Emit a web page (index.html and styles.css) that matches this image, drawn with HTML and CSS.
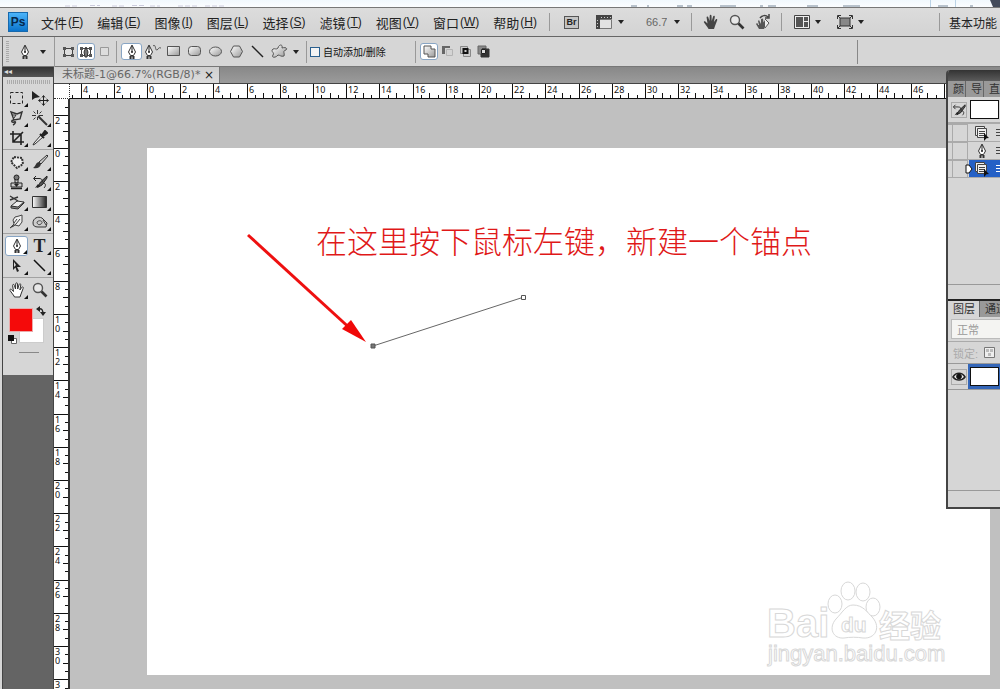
FILE: index.html
```html
<!DOCTYPE html>
<html lang="zh-CN">
<head>
  <meta charset="UTF-8" />
  <meta name="viewport" content="width=device-width, initial-scale=1" />
  <title>未标题-1</title>
  <link rel="stylesheet" href="styles.css">
</head>
<body>

  <!-- shared icons -->
  <svg class="defs" width="0" height="0" aria-hidden="true">
    <defs>
      <linearGradient id="metal" x1="0" y1="0" x2="1" y2="1">
        <stop offset="0" stop-color="#fff" />
        <stop offset="1" stop-color="#999" />
      </linearGradient>
      <linearGradient id="fade">
        <stop offset="0" stop-color="#fff" />
        <stop offset="1" stop-color="#222" />
      </linearGradient>
      <symbol id="pen" viewBox="0 0 16 16">
        <path d="M8 1 4.500 8l2 3.500h3l2-3.500z" fill="#fff" stroke="#333" />
        <path d="M8 2v6" stroke="#222" />
        <circle cx="8" cy="8" r="1" fill="#222" />
        <path d="M5.500 12h5v3h-5z" fill="#333" />
        <path d="M7.500 12.500h1V15h-1z" fill="#ddd" />
      </symbol>
      <symbol id="hand" viewBox="0 0 16 16">
        <path d="M5 14 1 8.500c-.6-1.200.8-1.800 1.600-.8L4.500 9.500 3.600 3.500c-.1-1.300 1.400-1.500 1.700-.2L6.500 7 6.700 1.800c.1-1.300 1.700-1.300 1.800 0L8.700 7l1.400-4.500c.4-1.200 1.900-.8 1.700.4L10.900 8l1.800-2.600c.7-1 2-.3 1.500.9L12 12l-1 3H5.500z" />
      </symbol>
      <symbol id="lens" viewBox="0 0 16 16">
        <circle cx="6" cy="6" r="4.500" fill="#e8e8e8" stroke="#555" stroke-width="1.400" />
        <path d="m9.500 9.500 5 5" stroke="#333" stroke-width="2.600" />
      </symbol>
      <symbol id="doc" viewBox="0 0 16 16">
        <path d="M1.500 1.500h9v2h2v9h-9v-2h-2z" fill="#eee" stroke="#444" />
        <path d="M3.500 10.500v-7h7M5 6.500h6M5 8.500h6M5 10.500h5" fill="none" stroke="#444" />
        <path d="m10 8 5 5-2.500.3L10 16z" fill="#111" />
      </symbol>
      <symbol id="histbrush" viewBox="0 0 16 16">
        <path d="M15 2 8.500 8l-3 5.500L10 11l5-7z" fill="#555" stroke="#222" />
        <path d="M2 4.500h5c3 0 4 2 3 4M4 2 1.500 4.500 4 7M11 9c3 0 3 3 1 5" fill="none" stroke="#222" />
        <path d="m3 14 3-4 2 2z" fill="#222" />
      </symbol>
    </defs>
  </svg>

  <div class="browser-edge">
    <svg width="100%" height="7" aria-hidden="true">
      <path d="M65 6h14M90 5.500h10M112 6h14M132 5.500h14M150 6h10M178 6h20M205 6h20" stroke="#ccd" stroke-dasharray="5 2" />
      <path d="M631 6h6M647 6h2M677 6h6M687 6h5M720 6h16M760 6h3M768 6h8M807 6h11M843 6h17M938 6h10M970 6h3" stroke="#789" />
      <path d="M930.500 0v7M955.500 0v7" stroke="#bcd3e6" />
      <path d="M990 0h10v7h-7z" fill="#434a5a" />
    </svg>
  </div>

  <header class="menubar">
    <div class="logo">Ps</div>
    <nav class="menus">
      <button>文件<span>(<u>F</u>)</span></button>
      <button>编辑<span>(<u>E</u>)</span></button>
      <button>图像<span>(<u>I</u>)</span></button>
      <button>图层<span>(<u>L</u>)</span></button>
      <button>选择<span>(<u>S</u>)</span></button>
      <button>滤镜<span>(<u>T</u>)</span></button>
      <button>视图<span>(<u>V</u>)</span></button>
      <button>窗口<span>(<u>W</u>)</span></button>
      <button>帮助<span>(<u>H</u>)</span></button>
    </nav>
    <div class="app-tools">
      <button class="bridge">Br</button>
      <button class="drop" aria-label="查看额外内容">
        <svg width="18" height="14"><path d="M4.500 4.500h12v9h-12z" fill="#e2e2e2" stroke="#777" /><path d="M1 0h16v4H5v10H1z" fill="#444" /><path d="M6 2.500h11M2.500 5v8" stroke="#ccc" stroke-dasharray="1 2" /></svg>
      </button>
      <label class="zoom drop"><select aria-label="缩放级别"><option>66.7</option></select></label>
    </div>
    <div class="app-tools view-tools">
      <button aria-label="抓手工具"><svg width="16" height="16" fill="#444"><use href="#hand" /></svg></button>
      <button aria-label="缩放工具"><svg width="16" height="16"><use href="#lens" /></svg></button>
      <button aria-label="旋转视图工具">
        <svg width="16" height="16"><path d="m4 15-3-5 1-1 2 2-1-4 1-1 2 4V5l2-.5.5 4L10 6l2 1-1 4-2 4z" fill="#555" /><path d="m10 5 4 4-4 5" fill="#eee" stroke="#555" /><path d="M5 4c2-3 6-3 8-1M14 0v4h-4" fill="none" stroke="#444" stroke-width="1.500" /></svg>
      </button>
    </div>
    <div class="app-tools layout-tools">
      <button class="drop" aria-label="排列文档">
        <svg width="16" height="14"><path d="M.5.500h15v13H.500z" fill="#eee" stroke="#444" /><path d="M2 2h7v10H2zM10 2h4v4h-4zM10 7h4v5h-4z" fill="#555" /></svg>
      </button>
      <button class="drop" aria-label="屏幕模式">
        <svg width="16" height="14"><path d="M3 3h10v8H3z" fill="#888" stroke="#333" /><path d="M.500 4V.500H4M12 .500h3.500V4M15.500 10v3.500H12M4 13.500H.500V10" fill="none" stroke="#333" /><path d="m1 1 2 2M15 1l-2 2M1 13l2-2M15 13l-2-2" stroke="#333" /></svg>
      </button>
    </div>
    <button class="workspace">基本功能</button>
  </header>

  <section class="options">
    <div class="current-tool">
      <span class="grip"></span>
      <button class="drop" aria-label="钢笔工具预设"><svg width="16" height="16"><use href="#pen" /></svg></button>
    </div>
    <div class="opt-group narrow">
      <button aria-label="形状图层"><svg width="13" height="12"><path d="M2.500 2.500h8v7h-8z" fill="#ddd" stroke="#444" /><path d="M1 1h3v3H1zM9 1h3v3H9zM1 8h3v3H1zM9 8h3v3H9z" fill="#555" /></svg></button>
      <button class="active" aria-label="路径"><svg width="14" height="12"><path d="M2.500 2.500h9v7h-9z" fill="#fff" stroke="#444" /><path d="M1 1h3v3H1zM10 1h3v3h-3zM1 8h3v3H1zM10 8h3v3h-3z" fill="#555" /><path d="m7 1-2 5 1 5h2l1-5z" fill="#777" stroke="#333" /></svg></button>
      <button aria-label="填充像素"><svg width="11" height="11"><path d="M1.500 1.500h8v8h-8z" fill="#ddd" stroke="#999" /></svg></button>
    </div>
    <div class="opt-group shapes">
      <button class="active" aria-label="钢笔工具"><svg width="16" height="16"><use href="#pen" /></svg></button>
      <button aria-label="自由钢笔工具"><svg width="18" height="16"><use href="#pen" x="-3" width="16" height="16" /><path d="M9 2c3-3 2 5 4 4s1-3 4-2" fill="none" stroke="#555" /></svg></button>
      <button aria-label="矩形工具"><svg width="13" height="11"><path d="M.500.500h12v9H.500z" fill="url(#metal)" stroke="#555" /></svg></button>
      <button aria-label="圆角矩形工具"><svg width="13" height="11"><rect x=".5" y=".5" width="12" height="9" rx="3" fill="url(#metal)" stroke="#555" /></svg></button>
      <button aria-label="椭圆工具"><svg width="13" height="11"><ellipse cx="6.500" cy="5.500" rx="6" ry="4.500" fill="url(#metal)" stroke="#555" /></svg></button>
      <button aria-label="多边形工具"><svg width="13" height="13"><path d="M3.500 1h6l3 5.500-3 5.500h-6l-3-5.500z" fill="url(#metal)" stroke="#555" /></svg></button>
      <button aria-label="直线工具"><svg width="13" height="13"><path d="m1 1 11 11" stroke="#222" stroke-width="1.500" /></svg></button>
      <button class="drop custom-shape" aria-label="自定形状工具"><svg width="17" height="15"><path d="M7 4c1-4 5-4 4 0 3-1 6 0 4 2-4 1-1 3-2 6-3 1-4-1-6-1-2 3-7 3-5 0C4 8-1 8 2 5c2-1 3 1 5-1z" fill="url(#metal)" stroke="#555" /></svg></button>
    </div>
    <label class="auto-add"><input type="checkbox">自动添加/删除</label>
    <div class="opt-group narrow">
      <button class="active" aria-label="添加到路径区域"><svg width="13" height="13"><path d="M1 1h7v3h4v8H5V9H1z" fill="url(#metal)" stroke="#555" /></svg></button>
      <button aria-label="从路径区域减去"><svg width="13" height="13"><path d="M5.500 4.500h6v6h-6z" fill="#d4d4d4" stroke="#b4b4b4" /><path d="M1 9V1h8v2H4v6z" fill="#666" /></svg></button>
      <button aria-label="交叉路径区域"><svg width="13" height="13"><path d="M1.500 1.500h7v7h-7z" fill="#ccc" stroke="#888" /><path d="M4.500 4.500h7v7h-7z" fill="#ccc" stroke="#888" /><path d="M4.500 4h4v4h-4z" fill="#ccc" stroke="#111" stroke-width="2" /></svg></button>
      <button aria-label="重叠路径区域除外"><svg width="13" height="13"><path d="M1 1h8v8H1z" fill="#888" stroke="#666" /><path d="M5 4h7v8H4V9h5V4z" fill="#333" stroke="#333" /><path d="M4.500 4.500h4v4h-4z" fill="#ddd" stroke="#222" /></svg></button>
    </div>
    <span class="options-end"></span>
  </section>

  <main class="workarea">
    <aside class="toolcol">
      <div class="tool-head">◂◂</div>
      <div class="toolbox">
        <div class="tool-grip"></div>
        <div class="tool-group">
          <button class="more" aria-label="选框工具"><svg width="16" height="16"><path d="M1.500 2.500h12v11h-12z" fill="none" stroke="#222" stroke-dasharray="3 2" /></svg></button>
          <button aria-label="移动工具"><svg width="18" height="16"><path d="M1 1v9l3-2 5-1z" fill="#222" /><path d="M12.500 6v9M8 10.500h9M11 7.500l1.500-2L14 7.500M11 13.500l1.500 2 1.500-2M9.500 9l-2 1.500 2 1.500M15.500 9l2 1.500-2 1.500" fill="none" stroke="#222" /></svg></button>
          <button class="more" aria-label="套索工具"><svg width="16" height="16"><path d="m2 2 6 2 5-2-2 7-6 1zM5 10c-3 0-3 3 0 2s1 2-1 3" fill="none" stroke="#333" stroke-width="1.400" /><path d="M3 5h4l-2 3" fill="none" stroke="#333" /></svg></button>
          <button class="more" aria-label="魔棒工具"><svg width="16" height="16"><path d="m6 6 9 9" stroke="#333" stroke-width="2" /><path d="M5.500 0v4M5.500 7v3M0 5.500h4M7 5.500h4M1.500 1.500l2 2M9.500 1.500l-2 2M1.500 9.500l2-2" stroke="#333" /></svg></button>
          <button class="more" aria-label="裁剪工具"><svg width="16" height="16"><path d="M4 1v11h11M1 4h11v11M4 12 14 2" fill="none" stroke="#222" stroke-width="1.600" /></svg></button>
          <button class="more" aria-label="吸管工具"><svg width="16" height="16"><path d="m9 5-7 8-1 2 2-1 8-7z" fill="#eee" stroke="#333" /><path d="m8 4 4 4M10 5l3-4 2 2-4 3z" fill="#222" stroke="#222" stroke-width="2" /></svg></button>
        </div>
        <div class="tool-group">
          <button class="more" aria-label="修补工具"><svg width="16" height="16"><path d="m5 3 8 1 1 6-6 4-6-6z" fill="#eee" stroke="#333" stroke-width="2" stroke-dasharray="2 1" /></svg></button>
          <button class="more" aria-label="画笔工具"><svg width="16" height="16"><path d="m15 1-8 7 2 2 7-8z" fill="#ccc" stroke="#333" /><path d="M7 8c-3 0-3 4-6 6 4 1 7 0 8-4z" fill="#333" /></svg></button>
          <button class="more" aria-label="仿制图章工具"><svg width="16" height="16"><path d="M6 5h3v4H6zM2 9h11v4H2z" fill="#ccc" stroke="#222" /><circle cx="7.500" cy="3.500" r="2.500" fill="#777" stroke="#222" /><path d="M2 14.500h11" stroke="#222" stroke-width="1.500" /><path d="M5 10h5l-2.500 3z" fill="#222" /></svg></button>
          <button class="more" aria-label="历史记录画笔工具"><svg width="16" height="16"><use href="#histbrush" /></svg></button>
          <button class="more" aria-label="橡皮擦工具"><svg width="16" height="16"><path d="m2 12 6-5 7 1-6 6z" fill="#eee" stroke="#333" /><path d="M2 12v2l7 1 6-6V8l-6 5z" fill="#888" stroke="#333" /><path d="m1 2 8 5M1 6l8-3" stroke="#333" stroke-width="1.400" /></svg></button>
          <button class="more" aria-label="渐变工具"><svg width="16" height="16"><path d="M.500 2.500h14v11H.500z" fill="url(#fade)" stroke="#333" /></svg></button>
          <button class="more" aria-label="涂抹工具"><svg width="16" height="16"><path d="m1 14 4-4-1-4 2-3 4-1 3-1v7l-3 4-4-1z" fill="#eee" stroke="#444" /><path d="m5 9 3-4M7 10l4-5M3 13l4-3" stroke="#444" /></svg></button>
          <button class="more" aria-label="海绵工具"><svg width="16" height="16"><path d="M1 9c0-5 5-7 9-5l5 5-1 4H6c-3 0-5-1-5-4z" fill="#ccc" stroke="#333" /><path d="M5 8c3-3 7 0 4 2S5 9 5 8m6-2 3 5" fill="none" stroke="#444" /></svg></button>
        </div>
        <div class="tool-group">
          <button class="more active" aria-label="钢笔工具"><svg width="16" height="16"><use href="#pen" /></svg></button>
          <button class="more type" aria-label="文字工具">T</button>
          <button class="more" aria-label="直接选择工具"><svg width="16" height="16"><path d="M4 1v11l2.500-2.500L8 14l2-1-2-4h4z" fill="#222" /><path d="M5 4v5l2-2z" fill="#ddd" /></svg></button>
          <button class="more" aria-label="直线工具"><svg width="16" height="16"><path d="m2 2 11 11" stroke="#111" stroke-width="1.500" /></svg></button>
        </div>
        <div class="tool-group">
          <button class="more" aria-label="抓手工具"><svg width="16" height="16" fill="#fff" stroke="#333"><use href="#hand" /></svg></button>
          <button aria-label="缩放工具"><svg width="16" height="16"><use href="#lens" /></svg></button>
        </div>
        <div class="swatches">
          <button class="background" aria-label="背景色"></button>
          <button class="foreground" aria-label="前景色"></button>
          <button class="swap" aria-label="切换前景色和背景色"><svg width="10" height="10"><path d="M2 3c4-1 5 1 5 5" fill="none" stroke="#222" stroke-width="1.400" /><path d="M4 0v6L0 3zM4 6h6l-3 4z" fill="#222" /></svg></button>
          <button class="reset" aria-label="默认颜色"><svg width="9" height="9"><path d="M3.500 3.500h5v5h-5z" fill="#fff" stroke="#666" /><path d="M0 0h6v6H0z" fill="#111" /></svg></button>
        </div>
        <div class="mask-line"></div>
      </div>
    </aside>

    <section class="document">
      <div class="tabs">
        <div class="tab">未标题-1@66.7%(RGB/8)* <button aria-label="关闭">×</button></div>
      </div>
      <div class="view">
        <div class="corner"></div>
        <svg class="ruler-x" id="rulerX"></svg>
        <svg class="ruler-y" id="rulerY"></svg>
        <div class="canvas">
          <div class="paper">
            <svg class="path-layer" width="400" height="220">
              <path d="M101 87 207 184" stroke="#ee1010" stroke-width="3" />
              <path d="M219 194 195 181 204 172z" fill="#f00808" />
              <path d="m226 198 151-49" stroke="#666" />
              <path d="M224 196h4v4h-4z" fill="#777" stroke="#555" />
              <path d="M374.500 147.500h4v4h-4z" fill="#fff" stroke="#555" />
            </svg>
            <p class="note">在这里按下鼠标左键，新建一个锚点</p>
            <svg class="watermark" width="184" height="98">
              <ellipse cx="71" cy="27" rx="7" ry="9" />
              <ellipse cx="84" cy="14" rx="7" ry="9" />
              <ellipse cx="99" cy="15" rx="7" ry="9" />
              <ellipse cx="109" cy="30" rx="7" ry="9" />
              <path d="M89 28c-7 0-11 8-17 14-8 9-3 20 8 19 6-1 13-1 19 0 12 1 18-10 10-20-6-6-10-13-20-13z" />
              <text x="3" y="60" class="bai">Bai</text>
              <text x="77" y="55" class="du">du</text>
              <text x="115" y="60" class="jy">经验</text>
              <text x="4" y="84" class="url">jingyan.baidu.com</text>
            </svg>
          </div>
        </div>
      </div>
    </section>

    <aside class="panels">
      <div class="panel-head"></div>
      <div class="panel-tabs dim"><span>颜</span><span>导</span><span>直</span></div>
      <div class="snapshot">
        <button aria-label="设置历史记录画笔的源"><svg width="14" height="14" viewBox="0 0 16 16"><use href="#histbrush" /></svg></button>
        <span class="thumb"></span>
      </div>
      <ul class="history">
        <li><span class="cell"></span><svg width="16" height="16"><use href="#doc" /></svg><i></i></li>
        <li><span class="cell"></span><svg width="16" height="16"><use href="#pen" /></svg><i></i></li>
        <li class="selected"><span class="cell"></span><svg width="16" height="16"><use href="#doc" /></svg><i></i><svg class="marker" width="8" height="10"><path d="M1 1h3l3 4-3 4H1z" fill="#fff" stroke="#111" /></svg></li>
      </ul>
      <div class="panel-foot"></div>
      <div class="panel-tabs"><span class="current">图层</span><span>通道</span></div>
      <div class="blend"><select aria-label="混合模式" disabled><option>正常</option></select></div>
      <div class="lock">锁定:<svg width="11" height="11"><path d="M.500.500h10v10H.500z" fill="#eee" stroke="#777" /><path d="M2 2h3v3H2zM6 2h3v3H6zM4 6h3v3H4z" fill="#bbb" /></svg></div>
      <div class="layer">
        <button aria-label="指示图层可见性"><svg width="14" height="12"><path d="M1 6c3-5 9-5 12 0-3 4-9 4-12 0z" fill="#eee" stroke="#222" stroke-width="1.500" /><circle cx="7" cy="5.500" r="2.800" fill="#111" /></svg></button>
        <span class="thumb"></span>
      </div>
      <div class="layer-empty"></div>
      <div class="panel-foot"></div>
    </aside>
  </main>

  <script src="script.js"></script>
</body>
</html>
```
FILE: styles.css
```css
* {
  box-sizing: border-box;
  margin: 0;
  padding: 0;
}

body {
  display: flex;
  flex-direction: column;
  height: 100vh;
  overflow: hidden;
  background: #d6d6d6;
  color: #222;
  font-family: "Liberation Sans", "Noto Sans CJK SC", sans-serif;
  font-size: 12px;
}

button {
  display: flex;
  align-items: center;
  justify-content: center;
  flex-shrink: 0;
  background: none;
  border: none;
  color: inherit;
  font: inherit;
}

svg {
  display: block;
  flex-shrink: 0;
}

.defs {
  position: absolute;
}

.browser-edge {
  height: 8px;
  flex-shrink: 0;
  background: linear-gradient(#f1f8fd, #fbfdff);
  border-bottom: 1px solid #777;
}

/* Menu bar */
.menubar {
  display: flex;
  align-items: center;
  flex-shrink: 0;
  height: 29px;
  padding-left: 8px;
  border-bottom: 1px solid #666;
  background: linear-gradient(#dcdcdc, #d3d3d3);
  white-space: nowrap;
}

.logo {
  width: 20px;
  height: 20px;
  margin-right: 13px;
  border: 1px solid #1769ad;
  background: linear-gradient(#4cb4fa, #0b74cb);
  color: #06284d;
  font-size: 12px;
  font-weight: bold;
  line-height: 18px;
  text-align: center;
}

.menus {
  display: flex;
  gap: 14px;
  font-size: 13px;
}

.menus button {
  height: 16px;
}

.menus span {
  font-size: 12px;
  padding-left: 1px;
}

.app-tools {
  display: flex;
  align-items: center;
  height: 18px;
  margin-left: 12px;
  padding-left: 14px;
  border-left: 1px solid #999;
  gap: 16px;
}

.view-tools {
  padding-left: 11px;
  gap: 10px;
  margin-left: 11px;
}

.layout-tools {
  margin-left: 10px;
  padding-left: 12px;
}

.bridge {
  width: 15px;
  height: 13px;
  border: 1px solid #555;
  background: #c4c4c4;
  font-size: 9px;
  font-weight: bold;
}

.drop {
  display: flex;
  align-items: center;
  gap: 5px;
}

.drop::after {
  content: "";
  border: 3px solid transparent;
  border-top: 4px solid #222;
  border-bottom: 0;
}

.zoom {
  margin-left: 6px;
  gap: 7px;
}

.zoom select {
  width: 21px;
  appearance: none;
  border: none;
  background: none;
  color: #666;
  font: 11px "Liberation Sans", sans-serif;
}

.workspace {
  height: 18px;
  width: 61px;
  margin-left: auto;
  padding-left: 9px;
  border-left: 1px solid #999;
  justify-content: flex-start;
}

/* Options bar */
.options {
  display: flex;
  align-items: center;
  flex-shrink: 0;
  height: 30px;
  margin-left: 2px;
  border-left: 1px solid #666;
  border-bottom: 1px solid #777;
  background: #d6d6d6;
}

.current-tool {
  display: flex;
  align-items: center;
  width: 52px;
  height: 30px;
  padding-left: 3px;
  gap: 8px;
  border-right: 1px solid #999;
}

.current-tool .drop {
  gap: 7px;
}

.grip {
  width: 3px;
  height: 21px;
  background: repeating-linear-gradient(#aaa 0 1px, #d6d6d6 1px 2px);
}

.opt-group {
  display: flex;
  align-items: center;
  height: 22px;
  padding: 0 3px 0 4px;
  border-right: 1px solid #999;
}

.opt-group button {
  width: 21px;
  height: 17px;
  border-radius: 3px;
}

.opt-group.narrow button {
  width: 18px;
}

.opt-group .active,
.tool-group .active {
  background: #fff;
  border: 1px solid #88a5c4;
}

.opt-group .custom-shape {
  width: 33px;
  justify-content: flex-start;
  padding-left: 3px;
}

.shapes {
  padding-right: 5px;
}

.auto-add {
  display: flex;
  align-items: center;
  width: 109px;
  height: 22px;
  padding-left: 3px;
  gap: 3px;
  border-right: 1px solid #999;
  color: #111;
  font-size: 10px;
  white-space: nowrap;
}

.auto-add input {
  appearance: none;
  width: 10px;
  height: 10px;
  border: 1px solid #2b608f;
  background: #f4f4f4;
}

.auto-add + .narrow {
  border: none;
}

.options-end {
  width: 143px;
  height: 24px;
  margin-left: auto;
  border-left: 1px solid #888;
}

/* Work area */
.workarea {
  position: relative;
  display: flex;
  flex: 1;
  min-height: 0;
  padding-left: 2px;
}

.toolcol {
  width: 52px;
  flex-shrink: 0;
  border-left: 1px solid #444;
  border-right: 1px solid #444;
  background: #646464;
}

.tool-head {
  height: 10px;
  padding-left: 1px;
  background: linear-gradient(#333, #555);
  color: #ddd;
  font-size: 8px;
  line-height: 9px;
}

.toolbox {
  height: 298px;
  background: #d6d6d6;
}

.tool-grip {
  height: 11px;
  border: solid #d6d6d6;
  border-width: 3px 3px 4px 4px;
  background: repeating-linear-gradient(90deg, #aaa 0 1px, #d6d6d6 1px 2px);
}

.tool-group {
  display: grid;
  grid-template-columns: 23px 23px;
  grid-auto-rows: 20px;
  padding: 2px 0 1px 2px;
  border-top: 1px solid #a2a2a2;
}

.tool-grip + .tool-group {
  padding-top: 0;
  border-top: none;
}

.tool-group button {
  position: relative;
}

.more::after {
  content: "";
  position: absolute;
  right: 0;
  bottom: 1px;
  border: 2px solid #111;
  border-top-color: transparent;
  border-left-color: transparent;
}

.tool-group .active {
  border-radius: 3px;
}

.tool-group .type {
  font-family: "Liberation Serif", serif;
  font-size: 18px;
  font-weight: bold;
}

.swatches {
  position: relative;
  height: 44px;
}

.swatches button {
  position: absolute;
}

.swatches .foreground {
  left: 6px;
  top: 7px;
  width: 24px;
  height: 24px;
  border: 1px solid #eba9a9;
  background: #f50a0a;
}

.swatches .background {
  left: 16px;
  top: 17px;
  width: 25px;
  height: 25px;
  border: 1px solid #ccc;
  background: #fff;
}

.swap {
  left: 33px;
  top: 5px;
}

.reset {
  left: 5px;
  top: 34px;
}

.mask-line {
  width: 20px;
  height: 1px;
  margin: 7px 0 0 16px;
  background: #888;
}

/* Document window */
.document {
  display: flex;
  flex: 1;
  flex-direction: column;
  min-width: 0;
}

.tabs {
  height: 17px;
  background: linear-gradient(#888, #9b9b9b);
  border-bottom: 1px solid #444;
}

.tab {
  display: flex;
  align-items: center;
  justify-content: space-between;
  width: 166px;
  height: 16px;
  padding: 0 5px 0 8px;
  background: linear-gradient(#cfcfcf, #dcdcdc);
  border-right: 1px solid #777;
  color: #666;
  font: 11px "DejaVu Sans", "Noto Sans CJK SC", sans-serif;
  line-height: 16px;
  white-space: nowrap;
}

.tab button {
  color: #222;
  font-size: 12px;
  line-height: 16px;
}

.view {
  display: grid;
  grid-template-columns: 16px 1fr;
  grid-template-rows: 15px 1fr;
  flex: 1;
  min-height: 0;
}

.corner {
  border-bottom: 1px dotted #333;
  border-right: 1px dotted #333;
  background: #fff;
}

.ruler-x,
.ruler-y {
  width: 100%;
  height: 100%;
  background: #fff;
  fill: #111;
  font: 9px "Noto Sans", sans-serif;
  overflow: hidden;
}

.ruler-x {
  border-bottom: 1px solid #111;
}

.ruler-y {
  border-right: 2px solid #333;
}

.canvas {
  display: flex;
  padding: 49px 10px 14px 77px;
  background: #c0c0c0;
}

.paper {
  position: relative;
  flex: 1;
  background: #fff;
}

.path-layer {
  position: absolute;
  left: 0;
  top: 0;
}

.note {
  position: absolute;
  left: 169px;
  top: 69px;
  color: #e01818;
  font-family: "Noto Sans CJK SC", sans-serif;
  font-size: 31px;
  font-weight: 300;
  line-height: 46px;
  white-space: nowrap;
}

.watermark {
  position: absolute;
  right: 42px;
  bottom: 0;
  fill: #fff;
  stroke: #d8d8d8;
}

.bai {
  font: bold 40px "Liberation Sans", sans-serif;
}

.du {
  font: bold 21px "Liberation Sans", sans-serif;
}

.jy {
  font: bold 31px "Noto Sans CJK SC", sans-serif;
}

.url {
  font: 22px "Liberation Sans", sans-serif;
}

/* Floating panels */
.panels {
  position: absolute;
  right: 0;
  top: 3px;
  width: 54px;
  border: solid #444;
  border-width: 0 0 2px 2px;
  border-top-left-radius: 4px;
  background: #d6d6d6;
  overflow: hidden;
}

.panel-head {
  height: 11px;
  background: linear-gradient(#333, #5b5b5b);
}

.panel-tabs {
  display: flex;
  height: 16px;
  background: #999;
  color: #333;
  font-size: 11px;
  line-height: 16px;
  white-space: nowrap;
}

.panel-tabs span {
  width: 32px;
  flex-shrink: 0;
  padding-left: 5px;
  border-right: 1px solid #666;
}

.panel-tabs .current {
  background: #d6d6d6;
}

.panel-tabs.dim span {
  width: 18px;
}

.snapshot {
  display: flex;
  align-items: center;
  height: 27px;
  padding-left: 3px;
  gap: 3px;
  border-bottom: 2px solid #aaa;
}

.snapshot button {
  width: 16px;
  height: 16px;
  border: 1px solid #aaa;
}

.thumb {
  width: 29px;
  height: 19px;
  flex-shrink: 0;
  border: 1px solid #111;
  background: #fff;
}

.history {
  height: 160px;
  list-style: none;
}

.history li {
  position: relative;
  display: flex;
  align-items: center;
  height: 18px;
  border-bottom: 1px solid #aaa;
  gap: 6px;
}

.cell {
  width: 21px;
  height: 17px;
  border: solid #aaa;
  border-width: 1px 1px 0 0;
  box-shadow: inset 4px 0 #d6d6d6, inset 5px 0 #aaa;
}

.history i {
  width: 4px;
  height: 8px;
  flex-shrink: 0;
  background: repeating-linear-gradient(#444 0 1px, transparent 1px 3px);
}

.history .selected {
  background: linear-gradient(90deg, #d6d6d6 21px, #2460c6 21px);
}

.selected i {
  background: repeating-linear-gradient(#fff 0 1px, transparent 1px 3px);
}

.marker {
  position: absolute;
  left: 17px;
  top: 4px;
}

.panel-foot {
  height: 17px;
  border-top: 1px solid #999;
}

.history + .panel-foot {
  border-bottom: 2px solid #222;
}

.blend {
  height: 24px;
  padding: 2px 0 2px 3px;
}

.blend select {
  width: 80px;
  height: 20px;
  padding-left: 5px;
  appearance: none;
  border: 1px solid #bbb;
  background: #f4f4f2;
  color: #999;
  font: 11px "Noto Sans CJK SC", sans-serif;
  opacity: 1;
}

.lock {
  display: flex;
  align-items: center;
  height: 23px;
  padding-left: 5px;
  gap: 6px;
  border-top: 1px solid #aaa;
  border-bottom: 1px solid #999;
  color: #aaa;
  font-size: 11px;
  white-space: nowrap;
}

.layer {
  display: flex;
  align-items: center;
  height: 26px;
  gap: 3px;
  padding-left: 3px;
  border-bottom: 1px solid #999;
  background: linear-gradient(90deg, #d6d6d6 20px, #3466b8 20px);
}

.layer button {
  width: 16px;
  height: 16px;
  border: 1px solid #aaa;
}

.layer-empty {
  height: 100px;
}
```
FILE: script.js
```js
const SVG_NS = 'http://www.w3.org/2000/svg';
const STEP = 33.2;     // pixels between two labelled marks
const ZERO_X = 77;     // where the paper starts on each ruler
const ZERO_Y = 49;
const DEPTH = 14;

function addTick(svg, x, y, width, height) {
  const rect = document.createElementNS(SVG_NS, 'rect');
  rect.setAttribute('x', x);
  rect.setAttribute('y', y);
  rect.setAttribute('width', width);
  rect.setAttribute('height', height);
  svg.appendChild(rect);
}

function addLabel(svg, x, y, value) {
  const text = document.createElementNS(SVG_NS, 'text');
  text.setAttribute('x', x);
  text.setAttribute('y', y);
  text.textContent = value;
  svg.appendChild(text);
}

function drawRuler(svg, zero, vertical) {
  svg.textContent = '';
  const length = vertical ? svg.clientHeight : svg.clientWidth;
  const first = Math.ceil(-zero / STEP * 4);

  for (let i = first; zero + i * STEP / 4 < length; i++) {
    const pos = Math.round(zero + i * STEP / 4);
    let size = 3;
    if (i % 4 === 0) size = DEPTH;
    else if (i % 2 === 0) size = 5;

    if (vertical) addTick(svg, DEPTH - size, pos, size, 1);
    else addTick(svg, pos, DEPTH - size, 1, size);

    if (i % 4 !== 0) continue;
    const label = String(Math.abs(i / 2));
    if (vertical) {
      [...label].forEach((digit, n) => {
        const y = pos + 9 + n * 9;
        if (y < length + 9) addLabel(svg, 1, y, digit);
      });
    } else {
      addLabel(svg, pos + 2, 9, label);
    }
  }
}

function drawRulers() {
  drawRuler(document.getElementById('rulerX'), ZERO_X, false);
  drawRuler(document.getElementById('rulerY'), ZERO_Y, true);
}

drawRulers();
window.addEventListener('resize', drawRulers);
```
